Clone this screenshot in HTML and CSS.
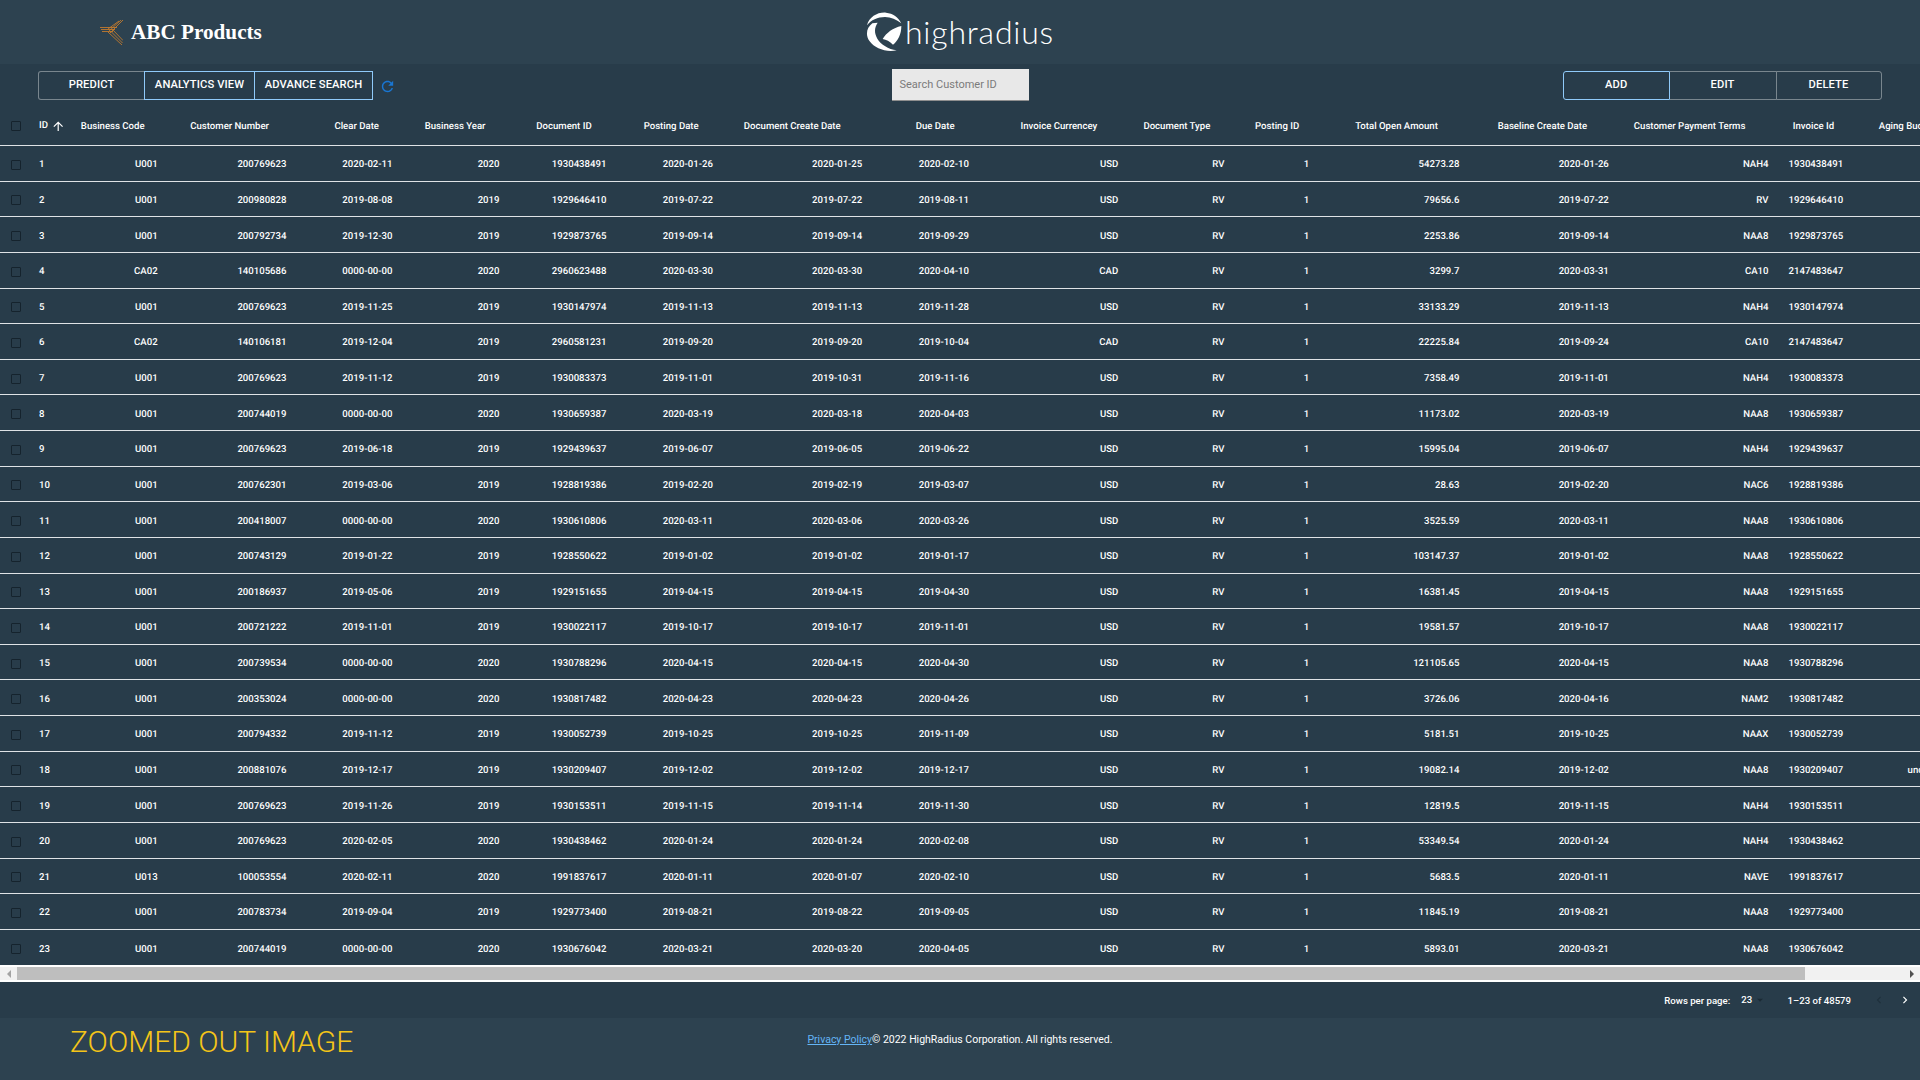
FILE: index.html
```html
<!DOCTYPE html>
<html lang="en">
<head>
<meta charset="utf-8">
<title>ABC Products</title>
<link rel="stylesheet" href="styles.css">
</head>
<body>
<div class="page">
<header class="top">
  <div class="brand">
    <svg class="brand-icon" viewBox="0 0 23 25" fill="none" stroke="#c27a2e" stroke-width="0.9">
      <path d="M0 7.5H17"/><path d="M1 9.5H15"/><path d="M2 11.5H13"/>
      <path d="M23 0L10 13"/><path d="M21 0L9 11"/><path d="M19 1L8 9"/>
      <path d="M8 12L22 25"/><path d="M10.5 11L22.5 23"/><path d="M13 10L23 20.5"/>
    </svg>
    <span class="brand-name">ABC Products</span>
  </div>
  <div class="hr-logo">
    <svg class="hr-mark" viewBox="25 38 108 120" fill="#fff">
      <path d="M28 78C35 52 60 38 85 40C106 42 122 54 131 72C116 60 100 53 82 53C60 53 40 62 28 78Z"/>
      <path d="M44 72C27 85 22 106 36 126C51 147 85 160 117 153C92 149 70 136 59 118C49 101 50 85 60 70Z"/>
      <path d="M131 80C131 105 121 125 106 136C96 126 86 121 75 119C86 100 106 86 131 80Z"/>
    </svg>
    <span class="hr-name">highradius</span>
  </div>
  <div></div>
</header>
<main class="main">
  <div class="toolbar">
    <div class="tools-left">
      <div class="btn-group">
        <button class="btn btn-first">PREDICT</button>
        <button class="btn btn-active btn-w2">ANALYTICS VIEW</button>
        <button class="btn btn-active btn-w3">ADVANCE SEARCH</button>
      </div>
      <svg class="refresh" viewBox="0 0 24 24"><path d="M17.65 6.35C16.2 4.9 14.21 4 12 4c-4.42 0-7.99 3.58-7.99 8s3.57 8 7.99 8c3.73 0 6.84-2.55 7.73-6h-2.08c-.82 2.33-3.04 4-5.65 4-3.31 0-6-2.69-6-6s2.69-6 6-6c1.66 0 3.14.69 4.22 1.78L13 11h7V4l-2.35 2.35z"/></svg>
    </div>
    <div class="search">Search Customer ID</div>
    <div class="tools-right">
      <div class="btn-group">
        <button class="btn btn-first btn-add">ADD</button>
        <button class="btn btn-edit">EDIT</button>
        <button class="btn btn-last">DELETE</button>
      </div>
    </div>
  </div>
  <div class="grid">
    <div class="row head">
      <span class="cb"></span>
      <span class="id-head">ID<svg class="sort" viewBox="0 0 24 24"><path d="M4 12l1.41 1.41L11 7.83V20h2V7.83l5.58 5.59L20 12l-8-8-8 8z"/></svg></span>
      <span>Business Code</span><span>Customer Number</span><span>Clear Date</span><span>Business Year</span><span>Document ID</span><span>Posting Date</span><span>Document Create Date</span><span>Due Date</span><span>Invoice Currencey</span><span>Document Type</span><span>Posting ID</span><span>Total Open Amount</span><span>Baseline Create Date</span><span>Customer Payment Terms</span><span>Invoice Id</span><span>Aging Bucket</span>
    </div>
    <div class="row"><span class="cb"></span><span>1</span><span>U001</span><span>200769623</span><span>2020-02-11</span><span>2020</span><span>1930438491</span><span>2020-01-26</span><span>2020-01-25</span><span>2020-02-10</span><span>USD</span><span>RV</span><span>1</span><span>54273.28</span><span>2020-01-26</span><span>NAH4</span><span>1930438491</span><span></span></div>
    <div class="row"><span class="cb"></span><span>2</span><span>U001</span><span>200980828</span><span>2019-08-08</span><span>2019</span><span>1929646410</span><span>2019-07-22</span><span>2019-07-22</span><span>2019-08-11</span><span>USD</span><span>RV</span><span>1</span><span>79656.6</span><span>2019-07-22</span><span>RV</span><span>1929646410</span><span></span></div>
    <div class="row"><span class="cb"></span><span>3</span><span>U001</span><span>200792734</span><span>2019-12-30</span><span>2019</span><span>1929873765</span><span>2019-09-14</span><span>2019-09-14</span><span>2019-09-29</span><span>USD</span><span>RV</span><span>1</span><span>2253.86</span><span>2019-09-14</span><span>NAA8</span><span>1929873765</span><span></span></div>
    <div class="row"><span class="cb"></span><span>4</span><span>CA02</span><span>140105686</span><span>0000-00-00</span><span>2020</span><span>2960623488</span><span>2020-03-30</span><span>2020-03-30</span><span>2020-04-10</span><span>CAD</span><span>RV</span><span>1</span><span>3299.7</span><span>2020-03-31</span><span>CA10</span><span>2147483647</span><span></span></div>
    <div class="row"><span class="cb"></span><span>5</span><span>U001</span><span>200769623</span><span>2019-11-25</span><span>2019</span><span>1930147974</span><span>2019-11-13</span><span>2019-11-13</span><span>2019-11-28</span><span>USD</span><span>RV</span><span>1</span><span>33133.29</span><span>2019-11-13</span><span>NAH4</span><span>1930147974</span><span></span></div>
    <div class="row"><span class="cb"></span><span>6</span><span>CA02</span><span>140106181</span><span>2019-12-04</span><span>2019</span><span>2960581231</span><span>2019-09-20</span><span>2019-09-20</span><span>2019-10-04</span><span>CAD</span><span>RV</span><span>1</span><span>22225.84</span><span>2019-09-24</span><span>CA10</span><span>2147483647</span><span></span></div>
    <div class="row"><span class="cb"></span><span>7</span><span>U001</span><span>200769623</span><span>2019-11-12</span><span>2019</span><span>1930083373</span><span>2019-11-01</span><span>2019-10-31</span><span>2019-11-16</span><span>USD</span><span>RV</span><span>1</span><span>7358.49</span><span>2019-11-01</span><span>NAH4</span><span>1930083373</span><span></span></div>
    <div class="row"><span class="cb"></span><span>8</span><span>U001</span><span>200744019</span><span>0000-00-00</span><span>2020</span><span>1930659387</span><span>2020-03-19</span><span>2020-03-18</span><span>2020-04-03</span><span>USD</span><span>RV</span><span>1</span><span>11173.02</span><span>2020-03-19</span><span>NAA8</span><span>1930659387</span><span></span></div>
    <div class="row"><span class="cb"></span><span>9</span><span>U001</span><span>200769623</span><span>2019-06-18</span><span>2019</span><span>1929439637</span><span>2019-06-07</span><span>2019-06-05</span><span>2019-06-22</span><span>USD</span><span>RV</span><span>1</span><span>15995.04</span><span>2019-06-07</span><span>NAH4</span><span>1929439637</span><span></span></div>
    <div class="row"><span class="cb"></span><span>10</span><span>U001</span><span>200762301</span><span>2019-03-06</span><span>2019</span><span>1928819386</span><span>2019-02-20</span><span>2019-02-19</span><span>2019-03-07</span><span>USD</span><span>RV</span><span>1</span><span>28.63</span><span>2019-02-20</span><span>NAC6</span><span>1928819386</span><span></span></div>
    <div class="row"><span class="cb"></span><span>11</span><span>U001</span><span>200418007</span><span>0000-00-00</span><span>2020</span><span>1930610806</span><span>2020-03-11</span><span>2020-03-06</span><span>2020-03-26</span><span>USD</span><span>RV</span><span>1</span><span>3525.59</span><span>2020-03-11</span><span>NAA8</span><span>1930610806</span><span></span></div>
    <div class="row"><span class="cb"></span><span>12</span><span>U001</span><span>200743129</span><span>2019-01-22</span><span>2019</span><span>1928550622</span><span>2019-01-02</span><span>2019-01-02</span><span>2019-01-17</span><span>USD</span><span>RV</span><span>1</span><span>103147.37</span><span>2019-01-02</span><span>NAA8</span><span>1928550622</span><span></span></div>
    <div class="row"><span class="cb"></span><span>13</span><span>U001</span><span>200186937</span><span>2019-05-06</span><span>2019</span><span>1929151655</span><span>2019-04-15</span><span>2019-04-15</span><span>2019-04-30</span><span>USD</span><span>RV</span><span>1</span><span>16381.45</span><span>2019-04-15</span><span>NAA8</span><span>1929151655</span><span></span></div>
    <div class="row"><span class="cb"></span><span>14</span><span>U001</span><span>200721222</span><span>2019-11-01</span><span>2019</span><span>1930022117</span><span>2019-10-17</span><span>2019-10-17</span><span>2019-11-01</span><span>USD</span><span>RV</span><span>1</span><span>19581.57</span><span>2019-10-17</span><span>NAA8</span><span>1930022117</span><span></span></div>
    <div class="row"><span class="cb"></span><span>15</span><span>U001</span><span>200739534</span><span>0000-00-00</span><span>2020</span><span>1930788296</span><span>2020-04-15</span><span>2020-04-15</span><span>2020-04-30</span><span>USD</span><span>RV</span><span>1</span><span>121105.65</span><span>2020-04-15</span><span>NAA8</span><span>1930788296</span><span></span></div>
    <div class="row"><span class="cb"></span><span>16</span><span>U001</span><span>200353024</span><span>0000-00-00</span><span>2020</span><span>1930817482</span><span>2020-04-23</span><span>2020-04-23</span><span>2020-04-26</span><span>USD</span><span>RV</span><span>1</span><span>3726.06</span><span>2020-04-16</span><span>NAM2</span><span>1930817482</span><span></span></div>
    <div class="row"><span class="cb"></span><span>17</span><span>U001</span><span>200794332</span><span>2019-11-12</span><span>2019</span><span>1930052739</span><span>2019-10-25</span><span>2019-10-25</span><span>2019-11-09</span><span>USD</span><span>RV</span><span>1</span><span>5181.51</span><span>2019-10-25</span><span>NAAX</span><span>1930052739</span><span></span></div>
    <div class="row"><span class="cb"></span><span>18</span><span>U001</span><span>200881076</span><span>2019-12-17</span><span>2019</span><span>1930209407</span><span>2019-12-02</span><span>2019-12-02</span><span>2019-12-17</span><span>USD</span><span>RV</span><span>1</span><span>19082.14</span><span>2019-12-02</span><span>NAA8</span><span>1930209407</span><span>undefined</span></div>
    <div class="row"><span class="cb"></span><span>19</span><span>U001</span><span>200769623</span><span>2019-11-26</span><span>2019</span><span>1930153511</span><span>2019-11-15</span><span>2019-11-14</span><span>2019-11-30</span><span>USD</span><span>RV</span><span>1</span><span>12819.5</span><span>2019-11-15</span><span>NAH4</span><span>1930153511</span><span></span></div>
    <div class="row"><span class="cb"></span><span>20</span><span>U001</span><span>200769623</span><span>2020-02-05</span><span>2020</span><span>1930438462</span><span>2020-01-24</span><span>2020-01-24</span><span>2020-02-08</span><span>USD</span><span>RV</span><span>1</span><span>53349.54</span><span>2020-01-24</span><span>NAH4</span><span>1930438462</span><span></span></div>
    <div class="row"><span class="cb"></span><span>21</span><span>U013</span><span>100053554</span><span>2020-02-11</span><span>2020</span><span>1991837617</span><span>2020-01-11</span><span>2020-01-07</span><span>2020-02-10</span><span>USD</span><span>RV</span><span>1</span><span>5683.5</span><span>2020-01-11</span><span>NAVE</span><span>1991837617</span><span></span></div>
    <div class="row"><span class="cb"></span><span>22</span><span>U001</span><span>200783734</span><span>2019-09-04</span><span>2019</span><span>1929773400</span><span>2019-08-21</span><span>2019-08-22</span><span>2019-09-05</span><span>USD</span><span>RV</span><span>1</span><span>11845.19</span><span>2019-08-21</span><span>NAA8</span><span>1929773400</span><span></span></div>
    <div class="row"><span class="cb"></span><span>23</span><span>U001</span><span>200744019</span><span>0000-00-00</span><span>2020</span><span>1930676042</span><span>2020-03-21</span><span>2020-03-20</span><span>2020-04-05</span><span>USD</span><span>RV</span><span>1</span><span>5893.01</span><span>2020-03-21</span><span>NAA8</span><span>1930676042</span><span></span></div>
  </div>
  <div class="scrollbar">
    <span class="sb-btn"><i class="tri-left"></i></span>
    <span class="sb-thumb"></span>
    <span class="sb-rest"></span>
    <span class="sb-btn"><i class="tri-right"></i></span>
  </div>
  <div class="pager">
    <span class="pg-label">Rows per page:</span>
    <span class="pg-size">23</span>
    <svg class="pg-drop" viewBox="0 0 24 24"><path d="M7 10l5 5 5-5z"/></svg>
    <span class="pg-range">1–23 of 48579</span>
    <svg class="pg-prev" viewBox="0 0 24 24"><path d="M15.41 16.59 10.83 12l4.58-4.59L14 6l-6 6 6 6z"/></svg>
    <svg class="pg-next" viewBox="0 0 24 24"><path d="M8.59 16.59 13.17 12 8.59 7.41 10 6l6 6-6 6z"/></svg>
  </div>
</main>
<footer class="bottom">
  <div class="note">ZOOMED OUT IMAGE</div>
  <div class="legal"><a class="legal-link" href="#">Privacy Policy</a>© 2022 HighRadius Corporation. All rights reserved.</div>
  <div></div>
</footer>
</div>
</body>
</html>
```
FILE: styles.css
```css
* { box-sizing: border-box; }
html, body { margin: 0; padding: 0; }
body { background: #283c4a; color: #fff; font-family: Roboto, "Liberation Sans", sans-serif; overflow: hidden; }
.page { width: 1920px; height: 1080px; display: flex; flex-direction: column; }

.top { height: 64px; background: #2d4250; display: grid; grid-template-columns: 1fr auto 1fr; align-items: center; }
.brand { display: flex; align-items: center; padding-left: 100px; }
.brand-icon { width: 23px; height: 25px; }
.brand-name { font-family: "Liberation Serif", serif; font-weight: 700; font-size: 21.2px; margin-left: 8px; }
.hr-logo { display: flex; align-items: center; gap: 3px; }
.hr-mark { width: 36px; height: 40px; }
.hr-name { font-family: Lato, sans-serif; font-weight: 300; font-size: 32px; line-height: 40px; letter-spacing: 0.8px; }

.main { flex: 1; background: #283c4a; display: flex; flex-direction: column; min-height: 0; }
.toolbar { height: 43px; padding: 0 38.5px; display: grid; grid-template-columns: 1fr auto 1fr; align-items: start; }
.tools-left { display: flex; align-items: center; padding-top: 7px; margin-left: -0.5px; }
.tools-right { display: flex; justify-content: flex-end; padding-top: 7px; }
.btn-group { display: flex; }
.btn { height: 29px; width: 106px; margin: 0; padding: 0 0 2px; background: transparent; color: #fff; font-family: Roboto, sans-serif; font-weight: 500; font-size: 11.2px; letter-spacing: 0.1px; border: 1px solid rgba(255,255,255,.38); }
.btn-first { border-radius: 3px 0 0 3px; border-right: 0; }
.btn-last { border-radius: 0 3px 3px 0; }
.btn-active { border-color: #90caf9; }
.btn-active + .btn-active { border-left: 0; }
.btn-w2 { width: 111px; }
.btn-w3 { width: 118px; }
.btn-add { border: 1px solid #90caf9; width: 106.5px; }
.btn-edit { border-left: 0; border-right: 0; }
.refresh { width: 17px; height: 17px; margin-left: 6px; fill: #1976d2; margin-top: 2px; }
.search { margin-top: 5px; width: 137px; height: 32px; background: #e8e8e8; color: #7b7b7b; border-bottom: 1px solid #8f8f8f; font-size: 11px; line-height: 31px; padding-left: 8px; }

.grid { overflow: hidden; }
.row { display: grid; grid-template-columns: 39px 30px 88.6px 128.9px 106px 107px 106.9px 106.5px 149.4px 106.6px 149.4px 106.1px 84.9px 150.2px 149.4px 159.6px 74.7px 200px; align-items: center; height: 35.64px; padding-top: 3px; border-bottom: 1px solid #dfe3e6; font-size: 9.6px; font-weight: 500; white-space: nowrap; text-align: right; width: 2100px; text-rendering: geometricPrecision; }
.row:last-child { border-bottom: 0; }
.row > :nth-child(2) { text-align: left; }
.row > :nth-child(18) { text-align: left; padding-left: 64.5px; }
.head { height: 39px; padding-top: 0; padding-bottom: 0; }
.head > :nth-child(3) { padding-right: 13px; }
.head > :nth-child(4) { padding-right: 17.5px; }
.head > :nth-child(5) { padding-right: 13.5px; }
.head > :nth-child(6) { padding-right: 14px; }
.head > :nth-child(7) { padding-right: 14.7px; }
.head > :nth-child(8) { padding-right: 14.2px; }
.head > :nth-child(9) { padding-right: 21.6px; }
.head > :nth-child(10) { padding-right: 14.3px; }
.head > :nth-child(11) { padding-right: 21px; }
.head > :nth-child(12) { padding-right: 14px; }
.head > :nth-child(13) { padding-right: 10px; }
.head > :nth-child(14) { padding-right: 21.6px; }
.head > :nth-child(15) { padding-right: 21.7px; }
.head > :nth-child(16) { padding-right: 23px; }
.head > :nth-child(17) { padding-right: 9px; }
.head > :nth-child(18) { padding-left: 35.7px; }
.cb { width: 10px; height: 10px; margin-left: 11px; border: 1.5px solid #15232d; border-radius: 1px; justify-self: start; }
.id-head { display: flex; align-items: center; }
.sort { width: 14.4px; height: 14.4px; margin-left: 3.5px; fill: #fff; }

.scrollbar { height: 17px; flex: none; background: #f1f1f1; display: flex; border-top: 2px solid #fff; border-bottom: 2px solid #fff; }
.sb-btn { width: 17px; display: flex; align-items: center; justify-content: center; }
.sb-thumb { width: 1787.5px; background: #bebebe; }
.sb-rest { flex: 1; }
.tri-left, .tri-right { width: 0; height: 0; border-top: 4px solid transparent; border-bottom: 4px solid transparent; }
.tri-left { border-right: 4px solid #a3a3a3; }
.tri-right { border-left: 4px solid #505050; }

.pager { flex: 1; display: flex; align-items: center; justify-content: flex-end; font-size: 9.6px; font-weight: 500; padding-right: 8.5px; }
.pg-label { margin-right: 11px; }
.pg-size { margin-right: 1px; margin-bottom: 2px; }
.pg-drop { width: 14px; height: 14px; fill: #1b2a35; }
.pg-range { margin-left: 20.5px; margin-right: 21px; }
.pg-prev, .pg-next { width: 14px; height: 14px; }
.pg-prev { fill: #1f303c; margin-right: 11.5px; }
.pg-next { fill: #fff; }

.bottom { height: 62px; padding-bottom: 16px; background: #2d4250; display: grid; grid-template-columns: 1fr auto 1fr; align-items: center; }
.note { padding-left: 70px; font-family: Roboto, sans-serif; font-weight: 300; font-size: 30px; color: #f5c518; white-space: nowrap; }
.legal { font-family: Roboto, sans-serif; font-size: 10.5px; color: #fff; margin-bottom: 3px; }
.legal-link { color: #64b5f6; text-decoration: underline; }
```
